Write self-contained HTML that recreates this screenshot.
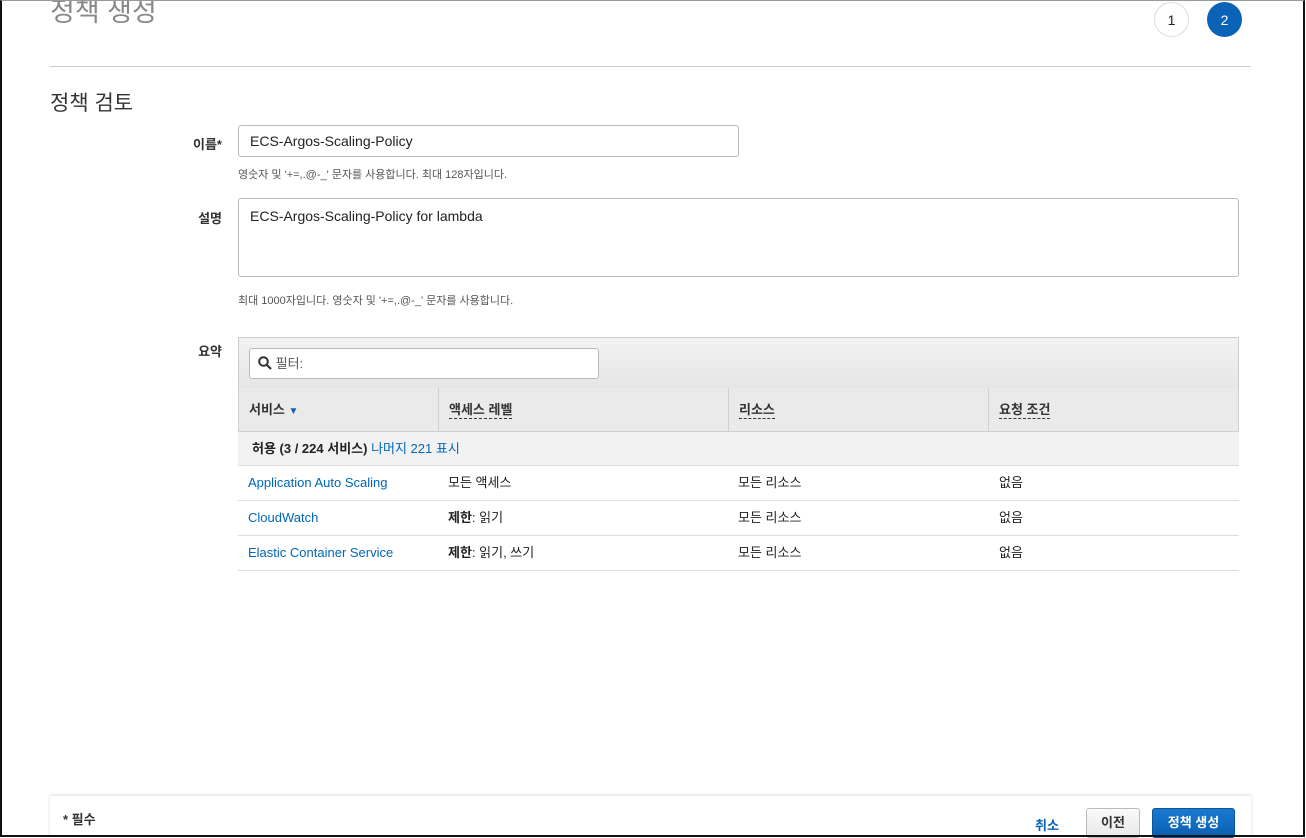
<!DOCTYPE html>
<html><head><meta charset="utf-8">
<style>
*{box-sizing:border-box;margin:0;padding:0}
body{width:1306px;height:838px;background:#fff;font-family:"Liberation Sans","Noto Sans CJK KR",sans-serif;color:#222;position:relative;overflow:hidden}
.frame{position:absolute;left:0;top:0;width:1305px;height:837px;border-left:2px solid #111;border-right:2px solid #111;border-bottom:2px solid #111;border-top:1px solid #999}
.abs{position:absolute}
.t1{left:50px;top:-10px;font-size:27px;color:#888}
.step{width:35px;height:35px;border-radius:50%;top:2px;font-size:14px;display:flex;align-items:center;justify-content:center}
.hr{left:50px;top:66px;width:1201px;height:1px;background:#ccc}
.t2{left:50px;top:87px;font-size:21px;color:#333}
.lbl{font-size:13px;font-weight:bold;color:#333;text-align:right;width:100px}
.inp{border:1px solid #bbb;border-radius:3px;background:#fff;font-size:14px;color:#222;padding:0 11px}
.help{font-size:11px;color:#555}
.tbl{left:238px;top:337px;width:1001px;height:234px}
.fr{position:absolute;left:0;top:0;width:1001px;height:52px;background:linear-gradient(#f2f2f2,#e6e6e6);border:1px solid #ccc}
.hd{position:absolute;left:0;top:51px;width:1001px;height:44px;background:#eaeaea;border:1px solid #d0d0d0;border-top:none}
.hc{position:absolute;top:0;height:43px;border-left:1px solid #d0d0d0;font-size:13px;font-weight:bold;color:#333;padding:0 10px;line-height:43px}
.hc span{border-bottom:1px dashed #333;line-height:16px;display:inline-block}
.row{position:absolute;left:0;width:1001px;height:35px;border-bottom:1px solid #ddd;font-size:13px}
.row div{position:absolute;top:0;line-height:33px;height:34px}
a{color:#0066b8;text-decoration:none}
.foot{left:50px;top:796px;width:1201px;height:42px;background:#fff;box-shadow:0 -1px 3px rgba(0,0,0,.15)}
</style></head><body>
<div class="abs t1">정책 생성</div>
<div class="abs step" style="left:1154px;border:1px solid #ddd;color:#222">1</div>
<div class="abs step" style="left:1207px;background:#0a63b6;color:#fff">2</div>
<div class="abs hr"></div>
<div class="abs t2">정책 검토</div>

<div class="abs lbl" style="left:122px;top:134px">이름*</div>
<div class="abs inp" style="left:238px;top:125px;width:501px;height:32px;line-height:30px">ECS-Argos-Scaling-Policy</div>
<div class="abs help" style="left:238px;top:166px">영숫자 및 '+=,.@-_' 문자를 사용합니다. 최대 128자입니다.</div>

<div class="abs lbl" style="left:122px;top:208px">설명</div>
<div class="abs inp" style="left:238px;top:198px;width:1001px;height:79px;padding-top:9px">ECS-Argos-Scaling-Policy for lambda</div>
<div class="abs help" style="left:238px;top:292px">최대 1000자입니다. 영숫자 및 '+=,.@-_' 문자를 사용합니다.</div>

<div class="abs lbl" style="left:122px;top:341px">요약</div>
<div class="abs tbl">
 <div class="fr"><div class="abs inp" style="left:10px;top:10px;width:350px;height:31px;line-height:29px;padding-left:8px;color:#555;font-size:13px"><svg width="14" height="14" viewBox="0 0 14 14" style="vertical-align:-2px"><circle cx="5.5" cy="5.5" r="4.3" fill="none" stroke="#333" stroke-width="2"/><path d="M8.6 8.6L13 13" stroke="#333" stroke-width="2.2"/></svg> 필터:</div></div>
 <div class="hd">
  <div class="hc" style="left:0;border-left:none;width:200px">서비스 <span style="border:none;color:#0a63b6;font-size:10px">▼</span></div>
  <div class="hc" style="left:199px;width:291px"><span>액세스 레벨</span></div>
  <div class="hc" style="left:489px;width:261px"><span>리소스</span></div>
  <div class="hc" style="left:749px;width:251px"><span>요청 조건</span></div>
 </div>
 <div class="row" style="top:95px;height:34px;background:#f2f2f2"><div style="left:14px;font-weight:bold">허용 (3 / 224 서비스) <a style="font-weight:normal">나머지 221 표시</a></div></div>
 <div class="row" style="top:129px"><div style="left:10px"><a>Application Auto Scaling</a></div><div style="left:210px">모든 액세스</div><div style="left:500px">모든 리소스</div><div style="left:761px">없음</div></div>
 <div class="row" style="top:164px"><div style="left:10px"><a>CloudWatch</a></div><div style="left:210px"><b>제한</b>: 읽기</div><div style="left:500px">모든 리소스</div><div style="left:761px">없음</div></div>
 <div class="row" style="top:199px"><div style="left:10px"><a>Elastic Container Service</a></div><div style="left:210px"><b>제한</b>: 읽기, 쓰기</div><div style="left:500px">모든 리소스</div><div style="left:761px">없음</div></div>
</div>

<div class="abs foot">
 <div class="abs" style="left:13px;top:13px;font-size:13px;font-weight:bold;color:#333">* 필수</div>
 <div class="abs" style="left:985px;top:19px;font-size:13px;font-weight:bold;color:#0a63b6">취소</div>
 <div class="abs" style="left:1036px;top:12px;width:54px;height:30px;border:1px solid #bbb;border-radius:3px;background:linear-gradient(#fafafa,#e8e8e8);font-size:13px;font-weight:bold;text-align:center;line-height:28px;color:#333">이전</div>
 <div class="abs" style="left:1102px;top:12px;width:83px;height:30px;border:1px solid #0a55a0;border-radius:3px;background:linear-gradient(#1a7ad0,#0a5fb0);font-size:13px;font-weight:bold;text-align:center;line-height:28px;color:#fff">정책 생성</div>
</div>
<div class="frame"></div>
</body></html>
